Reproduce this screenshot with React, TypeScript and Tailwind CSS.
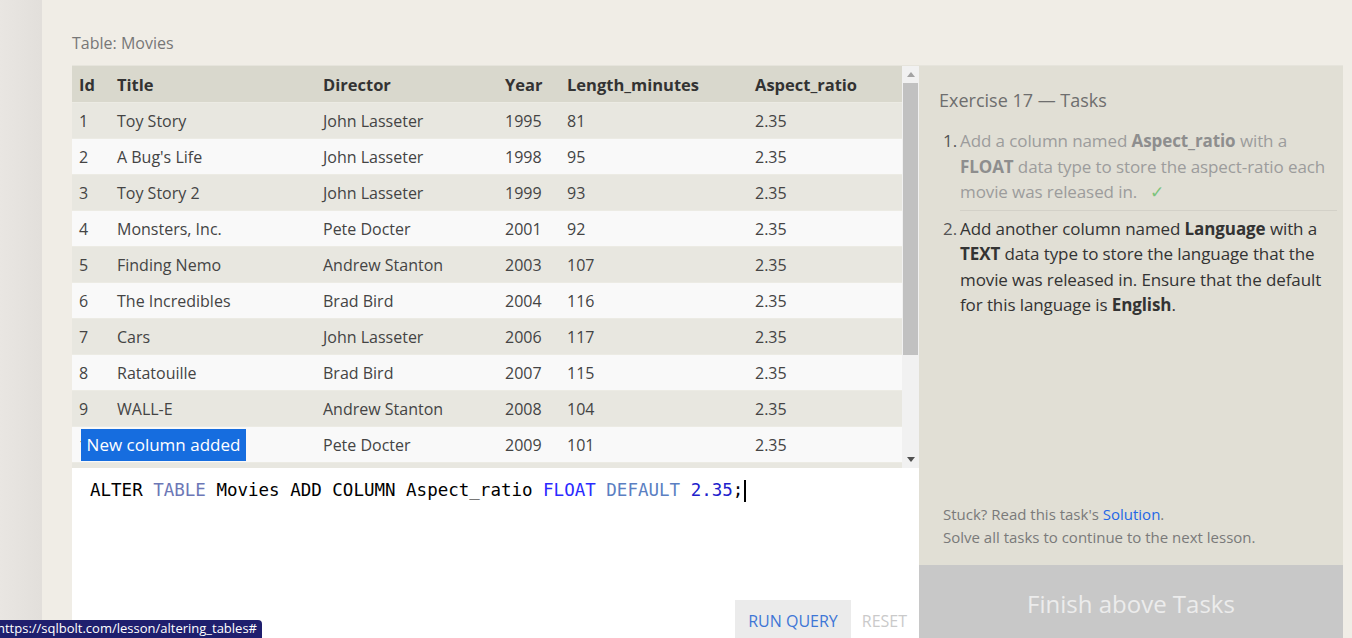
import React from "react";

const movies = [
  [1, "Toy Story", "John Lasseter", 1995, 81],
  [2, "A Bug's Life", "John Lasseter", 1998, 95],
  [3, "Toy Story 2", "John Lasseter", 1999, 93],
  [4, "Monsters, Inc.", "Pete Docter", 2001, 92],
  [5, "Finding Nemo", "Andrew Stanton", 2003, 107],
  [6, "The Incredibles", "Brad Bird", 2004, 116],
  [7, "Cars", "John Lasseter", 2006, 117],
  [8, "Ratatouille", "Brad Bird", 2007, 115],
  [9, "WALL-E", "Andrew Stanton", 2008, 104],
  [10, "Up", "Pete Docter", 2009, 101],
];

const cols = ["w-[38px]", "w-[206px]", "w-[182px]", "w-[62px]", "w-[188px]", "flex-1"];

function Row({ cells, head, odd }: { cells: (string | number)[]; head?: boolean; odd?: boolean }) {
  const bg = head
    ? "bg-[#d9d8cd] h-[37px] pt-[2px] font-bold text-[16.5px] text-[#333]"
    : odd
    ? "bg-[#e8e7e0] h-[36px] text-[#444]"
    : "bg-[#f9f9f9] h-[36px] text-[#444]";
  return (
    <div className={`flex items-center border-b border-[#ecebe4] ${bg}`}>
      {cells.map((c, i) => (
        <div key={i} className={`${cols[i]} pl-[7px] whitespace-nowrap`}>
          {c}
        </div>
      ))}
    </div>
  );
}

export default function App() {
  return (
    <div className="relative flex h-[638px] w-[1352px] overflow-hidden bg-[#f0ede6] text-[16px]" style={{ fontFamily: '"Open Sans", "Noto Sans", sans-serif' }}>
      <div className="w-[42px] bg-gradient-to-r from-[#e9e6e2] to-[#e2dfdb]" />
      <div className="flex flex-1 flex-col pl-[30px] pr-[9px]">
        <div className="pt-[31px] h-[65px] text-[16px] text-[#777]">Table: Movies</div>
        <div className="flex flex-1 border-t border-[#e6e4dc]">
          <div className="flex w-[847px] flex-col">
            <div className="flex h-[402px] bg-[#e8e7e0]">
              <div className="flex-1">
                <Row cells={["Id", "Title", "Director", "Year", "Length_minutes", "Aspect_ratio"]} head />
                {movies.map((m, i) => (
                  <Row key={i} cells={[...m, "2.35"]} odd={i % 2 === 0} />
                ))}
              </div>
              <div className="flex w-[17px] flex-col items-center bg-[#f1f1f1]">
                <div className="flex h-[17px] items-center">
                  <svg width="8" height="5" viewBox="0 0 8 5"><path d="M0 5L4 0L8 5Z" fill="#a3a3a3" /></svg>
                </div>
                <div className="h-[272px] w-[15px] bg-[#c1c1c1]" />
                <div className="flex-1" />
                <div className="flex h-[17px] items-center">
                  <svg width="8" height="5" viewBox="0 0 8 5"><path d="M0 0L4 5L8 0Z" fill="#505050" /></svg>
                </div>
              </div>
            </div>
            <div className="flex flex-1 flex-col bg-white">
              <div className="pl-[18px] pt-[9px] text-[17.5px] text-black" style={{ fontFamily: '"DejaVu Sans Mono", monospace' }}>
                ALTER <span className="text-[#6c77b6]">TABLE</span> Movies ADD COLUMN Aspect_ratio{" "}
                <span className="text-[#2a2aff]">FLOAT</span> <span className="text-[#5b7fc2]">DEFAULT</span>{" "}
                <span className="text-[#2020cc]">2.35</span>;<span className="ml-[1px] inline-block h-[22px] w-[2px] bg-black align-middle" />
              </div>
              <div className="flex-1" />
              <div className="flex items-end justify-end pr-[12px]">
                <div className="flex h-[38px] items-center bg-[#ebebeb] px-[13px] pt-[4px] text-[16px] text-[#3e76d6]">RUN QUERY</div>
                <div className="flex h-[38px] items-center pl-[11px] pt-[4px] text-[16px] text-[#cacaca]">RESET</div>
              </div>
            </div>
          </div>
          <div className="flex flex-1 flex-col bg-[#e1dfd5]">
            <div className="flex-1 pl-[20px] pr-[6px] pt-[21px]">
              <div className="text-[18px] text-[#6e6e6e]">Exercise 17 — Tasks</div>
              <div className="mt-[14px] pl-[4px] text-[17px] leading-[25.5px]">
                <div className="flex pb-[5px] text-[#9c9c9c]">
                  <span className="w-[17px] text-[#555]">1.</span>
                  <div className="flex-1 border-b border-[#d3d1c8] pb-[5px] tracking-[-0.1px]">
                    Add a column named <b className="text-[#8e8e8e]">Aspect_ratio</b> with a <b className="text-[#8e8e8e]">FLOAT</b> data type to store the aspect-ratio each movie was released in.
                    <span className="ml-[13px] text-[#7cc47c]">✓</span>
                  </div>
                </div>
                <div className="flex text-[#333]">
                  <span className="w-[17px] text-[#555]">2.</span>
                  <div className="flex-1 tracking-[-0.1px]">
                    Add another column named <b>Language</b> with a <b>TEXT</b> data type to store the language that the movie was released in. Ensure that the default for this language is <b>English</b>.
                  </div>
                </div>
              </div>
            </div>
            <div className="px-[24px] pb-[16px] text-[15px] leading-[23px] text-[#7a7a7a]">
              <div>
                Stuck? Read this task's <span className="text-[#2467e6]">Solution</span>.
              </div>
              <div>Solve all tasks to continue to the next lesson.</div>
            </div>
            <div className="flex h-[73px] items-center justify-center bg-[#c8c8c8] pt-[5px] text-[24px] text-[#ececec]">Finish above Tasks</div>
          </div>
        </div>
      </div>
      <div className="absolute left-[81px] top-[429px] flex h-[32px] w-[165px] items-center justify-center bg-[#166ddf] text-[17px] text-white">New column added</div>
      <div className="absolute bottom-0 left-0 flex h-[18px] w-[262px] items-center overflow-hidden rounded-tr-[4px] bg-[#1f1f6e] text-[13px] text-white">
        <span className="ml-[-3px] whitespace-nowrap">https://sqlbolt.com/lesson/altering_tables#</span>
      </div>
    </div>
  );
}
